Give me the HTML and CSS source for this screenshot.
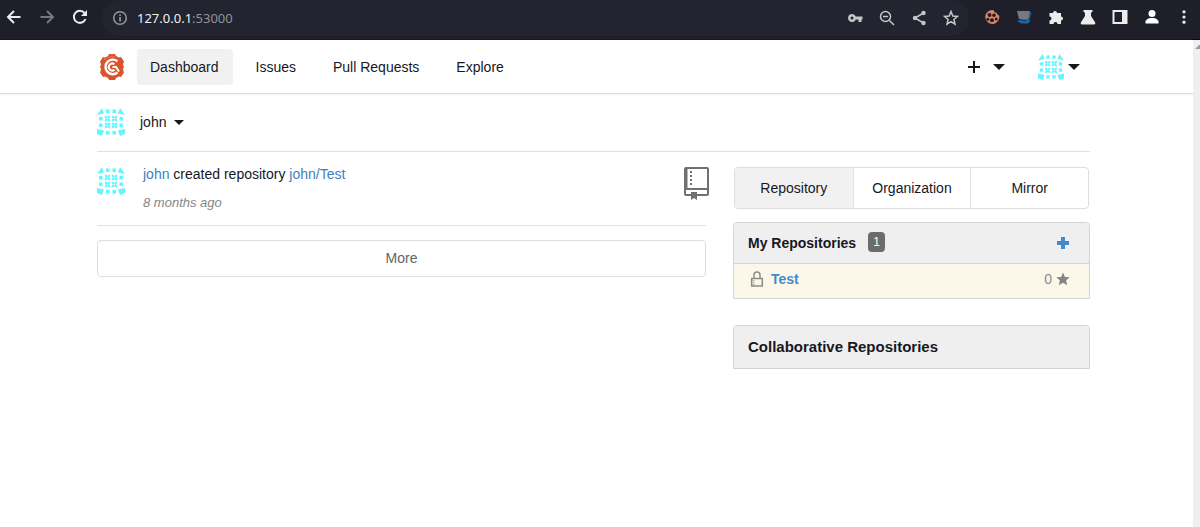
FILE: index.html
```html
<!DOCTYPE html>
<html lang="en">
<head>
<meta charset="utf-8">
<title>Dashboard</title>
<link rel="stylesheet" href="styles.css">
</head>
<body>
<svg class="defs" aria-hidden="true">
  <symbol id="patch" viewBox="0 0 6 6">
    <path d="M0 0h1.600L3 1.400 4.400 0H6v1.600L4.600 3 6 4.400V6H4.400L3 4.600 1.600 6H0V4.400L1.400 3 0 1.600z"/>
    <circle cx="3" cy="3" r=".8" fill="#fff"/>
  </symbol>
  <symbol id="avatar" viewBox="0 0 28 28">
    <path d="M5 0l2 5.500L0 7zM23 0l-2 5.500L28 7zM0 21l7 1.500L5 28 0 26zM28 21l-7 1.500 2 5.500 5-2z"/>
    <path d="M9 1.500h3.500V5H9zM15.500 1.500H19V5h-3.500zM9 23h3.500v3.500H9zM15.500 23H19v3.500h-3.500zM2 9h3.500v3.500H2zM2 15.500h3.500V19H2zM22.500 9H26v3.500h-3.500zM22.500 15.500H26V19h-3.500z"/>
    <use href="#patch" x="7.500" y="7.500" width="6" height="6"/>
    <use href="#patch" x="14.500" y="7.500" width="6" height="6"/>
    <use href="#patch" x="7.500" y="14.500" width="6" height="6"/>
    <use href="#patch" x="14.500" y="14.500" width="6" height="6"/>
  </symbol>
</svg>

<div class="chrome">
  <button class="tool" aria-label="Back"><svg viewBox="0 0 16 16"><path class="line" d="M14.500 8H2M8 2L2 8l6 6"/></svg></button>
  <button class="tool faded" aria-label="Forward"><svg viewBox="0 0 16 16"><path class="line" d="M1.500 8H14M8 2l6 6-6 6"/></svg></button>
  <button class="tool" aria-label="Reload"><svg viewBox="0 0 16 16"><path class="line" d="M13.500 10A6 6 0 1 1 12.500 4"/><path d="M15 1v6H9z"/></svg></button>
  <div class="address">
    <svg class="info" viewBox="0 0 16 16"><circle class="line thin" cx="8" cy="8" r="6.300"/><path d="M7.200 7h1.700v4.500H7.200zM7.200 4.400h1.700V6H7.200z"/></svg>
    <span class="url"><b>127.0.0.1</b>:53000</span>
    <div class="address-tools">
      <button class="tool" aria-label="Passwords"><svg viewBox="0 0 16 16"><path fill-rule="evenodd" d="M5 4a4 4 0 0 1 3.800 2.500H15.500v3H14.500V12h-3V9.500H8.800A4 4 0 1 1 5 4zm0 2.500a1.500 1.500 0 1 0 0 3 1.500 1.500 0 0 0 0-3z"/></svg></button>
      <button class="tool" aria-label="Zoom"><svg viewBox="0 0 16 16"><circle class="line thin" cx="6.500" cy="6.500" r="5"/><path class="line thin" d="M10.200 10.200l4.800 4.800M4 6.500h5"/></svg></button>
      <button class="tool" aria-label="Share"><svg viewBox="0 0 16 16"><path class="line thin" d="M12.500 3L4 8l8.500 5"/><circle cx="12.500" cy="3" r="2.200"/><circle cx="4" cy="8" r="2.200"/><circle cx="12.500" cy="13" r="2.200"/></svg></button>
      <button class="tool" aria-label="Bookmark"><svg viewBox="0 0 16 16"><path class="line thin" d="M8 1.500l1.800 4.500 4.700.4-3.600 3.100 1.100 4.700L8 11.700l-4 2.500 1.100-4.700L1.500 6.400 6.200 6z"/></svg></button>
    </div>
  </div>
  <div class="extensions">
    <button class="tool" aria-label="Cookies"><svg viewBox="0 0 16 16"><path fill="#e08468" d="M8 1l2 .6.600 2 2 .2 1 2 1.500.6A7 7 0 1 1 8 1z"/><g fill="#1e1f29"><circle cx="5.500" cy="6" r="2"/><circle cx="10" cy="6.200" r="1.800"/><circle cx="3.900" cy="10.300" r="1.500"/><circle cx="8" cy="11.300" r="2"/><circle cx="12.200" cy="10" r="1.500"/></g></svg></button>
    <button class="tool" aria-label="Proxy"><svg viewBox="0 0 16 16"><path fill="#1768ad" d="M14 3l1.500.5L13 11l1.500 1-3 2.500H5L1 12l3-1 6 1z"/><path fill="#77797c" d="M1 2h13l-2 8-3 1-6-1z"/></svg></button>
    <button class="tool" aria-label="Extensions"><svg viewBox="0 0 16 16"><path d="M1.500 4H5a2 2 0 1 1 4 0h4v3.500a2 2 0 1 1 0 4V15H9.500a2 2 0 1 0-4 0h-4v-3.500a2 2 0 1 0 0-4z"/></svg></button>
    <button class="tool" aria-label="Experiments"><svg viewBox="0 0 16 16"><path d="M3.500 1h9v1.500L11 4v3l4.500 7-1 1.500h-13l-1-1.500L5 7V4L3.500 2.500z"/></svg></button>
    <button class="tool" aria-label="Side panel"><svg viewBox="0 0 16 16"><path fill-rule="evenodd" d="M.5 1h15v14H.500zM2.500 3v10H10V3z"/></svg></button>
    <button class="tool profile" aria-label="Profile"><svg viewBox="0 0 16 16"><circle cx="8" cy="4.500" r="3.500"/><path d="M1.500 14.500V12C3 9.500 5.500 9 8 9s5 .5 6.500 3v2.500z"/></svg></button>
    <button class="tool" aria-label="Menu"><svg viewBox="0 0 16 16"><circle cx="8" cy="2.800" r="1.600"/><circle cx="8" cy="8" r="1.600"/><circle cx="8" cy="13.200" r="1.600"/></svg></button>
  </div>
</div>

<div class="viewport">
  <div class="page">
    <header class="topbar">
      <a class="logo" href="#" aria-label="Home"><svg viewBox="0 0 26 26"><path fill="#d9532c" d="M10 0h6l1 2 3 1.500L22 3l3 4.500-.8 2V12l1.300 1-1.300 1v2.500l.8 2L22 23l-2-.5-3 1.500-1 2h-6l-1-2-3-1.500-2 .5-3-4.500.8-2V14L.5 13l1.300-1V9.500L1 7.500 4 3l2 .5L9 2z"/><path fill="none" stroke="#fff" stroke-width="2.400" d="M18.500 7.300A7.300 7.300 0 1 0 18.500 18.500"/><path fill="none" stroke="#fff" stroke-width="2" d="M15.500 10.300a3.500 3.500 0 1 0 0 5.400M13.500 13h3.500l3 4.500"/><path fill="none" stroke="#e9a58d" stroke-dasharray="1 1" d="M5 5.500l5-2.500h6"/></svg></a>
      <nav>
        <a class="active" href="#">Dashboard</a>
        <a href="#">Issues</a>
        <a href="#">Pull Requests</a>
        <a href="#">Explore</a>
      </nav>
      <div class="account">
        <button class="drop create" aria-label="Create"><svg class="plus" viewBox="0 0 14 14"><path d="M6 1h2v5h5v2H8v5H6V8H1V6h5z"/></svg><i class="caret"></i></button>
        <button class="drop" aria-label="Account"><svg class="avatar"><use href="#avatar"/></svg><i class="caret"></i></button>
      </div>
    </header>
    <main>
      <div class="context">
        <svg class="avatar"><use href="#avatar"/></svg>
        <button class="drop">john<i class="caret small"></i></button>
      </div>
      <div class="columns">
        <section class="feed">
          <article>
            <svg class="avatar"><use href="#avatar"/></svg>
            <div class="news">
              <p><a href="#">john</a> created repository <a href="#">john/Test</a></p>
              <p class="time">8 months ago</p>
            </div>
            <svg class="repo" viewBox="0 0 25 33"><path fill-rule="evenodd" d="M2 0h21q2 0 2 2v25q0 2-2 2H13v4l-3-2-3 2v-4H2q-2 0-2-2V2q0-2 2-2zM3.500 2v19H23V2zM2 23v4h5v-2h6v2h10v-4z"/><path d="M6 4h2v2H6zM6 8h2v2H6zM6 12h2v2H6zM6 16h2v2H6z"/></svg>
          </article>
          <button class="more">More</button>
        </section>
        <aside>
          <div class="tabs">
            <button class="active">Repository</button>
            <button>Organization</button>
            <button>Mirror</button>
          </div>
          <section class="panel">
            <h2>My Repositories <span class="count">1</span><a class="add" href="#" aria-label="New repository"><svg viewBox="0 0 14 14"><path d="M5 1h4v4h4v4H9v4H5V9H1V5h4z"/></svg></a></h2>
            <div class="row">
              <svg class="lock" viewBox="0 0 14 16"><path fill="none" stroke="#8b8b86" stroke-width="1.500" d="M1.700 7.500h10.600V15H1.700zM4 7.500V4a3 3 0 0 1 6 0v3.500"/><path fill="#a8a8a2" d="M3 9h1.500v1H3zM3 11h1.500v1H3zM3 13h1.500v1H3z"/></svg>
              <a href="#">Test</a>
              <span class="stars">0<svg viewBox="0 0 14 14"><path d="M7 .5l1.900 4.400 4.800.4-3.600 3.200 1.100 4.700L7 10.700l-4.200 2.500 1.100-4.700L.3 5.300l4.800-.4z"/></svg></span>
            </div>
          </section>
          <section class="panel collab">
            <h2>Collaborative Repositories</h2>
          </section>
        </aside>
      </div>
    </main>
  </div>
  <div class="scrollbar"><svg viewBox="0 0 7 6"><path d="M2 5l4-4h1v4z"/></svg></div>
</div>
</body>
</html>
```

FILE: styles.css
```css
* { box-sizing: border-box; }
body {
  margin: 0;
  min-height: 100vh;
  display: flex;
  flex-direction: column;
  font: 14px/20px "Liberation Sans", Arial, sans-serif;
  color: #17181f;
  background: #fff;
}
button {
  font: inherit;
  color: inherit;
  background: none;
  border: 0;
  padding: 0;
}
a { color: #3f7fbd; text-decoration: none; }
p, h2 { margin: 0; }
svg { display: block; flex: none; }
.defs { position: absolute; width: 0; height: 0; }

.chrome {
  display: flex;
  height: 40px;
  padding: 0 8px 0 6px;
  background: #1e1f29;
  border-bottom: 1px solid #08080c;
  color: #ececec;
}
.tool { width: 16px; height: 34px; flex: none; }
.tool svg, .info { width: 16px; height: 16px; fill: currentColor; }
.tool .line, .info .line { fill: none; stroke: currentColor; stroke-width: 2; }
.tool .thin, .info .thin { stroke-width: 1.5; }
.faded { color: #77787c; }
.chrome > .tool { margin-right: 17px; }
.chrome > .tool:nth-child(3) { margin-right: 14px; }
.address {
  flex: 1;
  display: flex;
  align-items: center;
  height: 36px;
  padding: 0 10px;
  border-radius: 18px;
  background: #222430;
}
.info { color: #96979b; }
.url {
  margin-left: 9px;
  font: 13px/20px "Noto Sans", sans-serif;
  color: #929398;
}
.url b { font-weight: 400; color: #f0f0f0; }
.address-tools, .extensions { display: flex; gap: 16px; }
.address-tools { margin-left: auto; color: #c6c6c8; }
.extensions { margin-left: 15px; }
.profile { color: #fff; }

.viewport { flex: 1; display: flex; }
.page { flex: 1; min-width: 0; }
.scrollbar { width: 7px; background: #efefef; padding-top: 4px; }
.scrollbar svg { width: 7px; height: 6px; fill: #9b9b9b; }

.topbar {
  display: flex;
  align-items: center;
  height: 54px;
  padding: 0 113px 0 99px;
  border-bottom: 1px solid #dededf;
  box-shadow: 0 1px 2px #f0f0f0;
}
.logo svg { width: 26px; height: 26px; }
nav { display: flex; gap: 9px; margin-left: 12px; }
nav a {
  padding: 8px 14px 8px 13px;
  color: #17181f;
  border-radius: 4px;
}
nav a + a { padding-left: 14px; }
nav a.active { background: #f1f1f1; }
.account { display: flex; gap: 33px; margin-left: auto; }
.drop { display: flex; align-items: center; }
.plus { width: 14px; height: 14px; fill: #17181f; }
.caret {
  border: 6px solid transparent;
  border-top-color: #17181f;
  border-bottom: 0;
  margin-left: 4px;
}
.create .caret { margin-left: 12px; }
.avatar { width: 28px; height: 28px; fill: #62f6ff; }
.account .avatar { width: 26px; height: 26px; }

main { padding: 0 103px 0 97px; }
.context {
  display: flex;
  align-items: center;
  gap: 15px;
  height: 58px;
  padding-bottom: 1px;
  border-bottom: 1px solid #e1e1e2;
}
.caret.small { margin-left: 8px; border-width: 5px 5px 0; }
.columns {
  display: grid;
  grid-template-columns: 609fr 357fr;
  gap: 27px;
  padding-top: 15px;
}
article {
  display: flex;
  height: 59px;
  border-bottom: 1px solid #e1e1e2;
}
.news { flex: 1; margin: -3px 0 0 18px; }
.time { margin-top: 9px; font-size: 13px; font-style: italic; color: #858585; }
.repo { width: 25px; height: 33px; margin-right: -3px; fill: #707070; }
.more {
  width: 100%;
  height: 37px;
  margin-top: 14px;
  padding-bottom: 2px;
  color: #646464;
  border: 1px solid #dedede;
  border-radius: 4px;
}
.tabs {
  display: grid;
  grid-template-columns: repeat(3, 1fr);
  margin: 0 1px;
  border: 1px solid #dedede;
  border-radius: 4px;
  overflow: hidden;
}
.tabs button { height: 40px; border-left: 1px solid #e4e4e4; }
.tabs button:first-child { border-left: 0; }
.tabs .active { background: #f1f1f1; }
.panel {
  margin-top: 13px;
  border: 1px solid #d4d4d5;
  border-radius: 4px 4px 0 0;
}
.panel h2 {
  display: flex;
  align-items: center;
  height: 40px;
  padding: 0 19px 0 14px;
  font-size: 14px;
  background: #efefef;
  border-radius: 4px 4px 0 0;
}
.count {
  margin: 0 0 2px 12px;
  width: 17px;
  border-radius: 4px;
  text-align: center;
  font-size: 12px;
  font-weight: 400;
  color: #fff;
  background: #6c6c6c;
}
.add { margin-left: auto; }
.add svg { width: 14px; height: 14px; fill: #428bca; }
.row {
  display: flex;
  align-items: center;
  height: 35px;
  padding: 0 19px 4px 16px;
  background: #fcf8e9;
  border-top: 1px solid #d4d4d5;
}
.lock { width: 14px; height: 16px; }
.row a { margin-left: 7px; font-weight: 700; color: #428bca; }
.stars { display: flex; align-items: center; gap: 4px; margin-left: auto; color: #8b8b8b; }
.stars svg { width: 14px; height: 14px; fill: #858585; }
.collab { margin-top: 26px; }
.collab h2 { height: 42px; font-size: 15px; }
```
